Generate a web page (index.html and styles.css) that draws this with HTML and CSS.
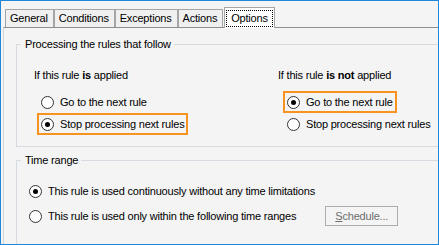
FILE: index.html
```html
<!DOCTYPE html>
<html lang="en">
<head>
<meta charset="utf-8">
<title>Rule options</title>
<link rel="stylesheet" href="styles.css">
</head>
<body>
<div class="window">
  <div class="tabstrip">
    <div class="tab">General</div>
    <div class="tab">Conditions</div>
    <div class="tab">Exceptions</div>
    <div class="tab">Actions</div>
    <div class="tab active"><span class="focus">Options</span></div>
  </div>
  <div class="panel">
    <fieldset class="group g1">
      <legend>Processing the rules that follow</legend>
      <div class="cols">
        <div class="col col-left">
          <div class="caption">If this rule <b>is</b> applied</div>
          <div class="opts">
            <label class="opt"><span class="radio"></span>Go to the next rule</label>
            <label class="opt hl"><span class="radio on"></span>Stop processing next rules</label>
          </div>
        </div>
        <div class="col col-right">
          <div class="caption">If this rule <b>is not</b> applied</div>
          <div class="opts">
            <label class="opt hl"><span class="radio on"></span>Go to the next rule</label>
            <label class="opt"><span class="radio"></span>Stop processing next rules</label>
          </div>
        </div>
      </div>
    </fieldset>
    <fieldset class="group g2">
      <legend>Time range</legend>
      <div class="rows">
        <label class="opt"><span class="radio on"></span>This rule is used continuously without any time limitations</label>
        <div class="opt"><span class="radio"></span>This rule is used only within the following time ranges<button class="btn" disabled><u>S</u>chedule...</button></div>
      </div>
    </fieldset>
  </div>
</div>
</body>
</html>
```
FILE: styles.css
```css
* { box-sizing: border-box; }
html, body { margin: 0; padding: 0; }
body {
  font-family: "Liberation Sans", Arial, sans-serif;
  font-size: 11px;
  letter-spacing: -0.2px;
  color: #000;
  background: #f4f4f4;
}
.window {
  width: 439px;
  height: 245px;
  border: 1px solid #1e87d9;
  background: #f4f4f4;
  overflow: hidden;
}
.tabstrip {
  display: flex;
  align-items: flex-end;
  height: 21px;
  margin-top: 6px;
  padding-left: 4px;
  position: relative;
  z-index: 1;
}
.tab {
  height: 18px;
  margin-bottom: 1px;
  padding: 0 5px 0 4px;
  border: 1px solid #a5a5a5;
  border-bottom: none;
  background: #f0f0f0;
  line-height: 17px;
  white-space: nowrap;
}
.tab.active {
  height: 21px;
  margin: 0 0 0 1px;
  padding: 2px 1px 0;
  background: #fff;
}
.focus {
  display: block;
  height: 17px;
  padding: 0 4px;
  border: 1px dotted #000;
  line-height: 14px;
}
.panel {
  margin: -1px -40px 0 2px;
  height: 240px;
  border-top: 1px solid #8e8e8e;
  border-left: 1px solid #d4d4d4;
}
.group {
  margin: 0 0 0 12px;
  padding: 0;
  border: 1px solid #d5dbe0;
  min-width: 0;
}
.group legend {
  margin-left: 4px;
  padding: 0 3px 0 4px;
  line-height: 13px;
}
.g1 {
  margin-top: 10px;
  padding: 17px 0 11px;
}
.g2 {
  margin-top: 7px;
  padding: 13px 0 20px;
}
.cols {
  display: flex;
  padding-left: 17px;
}
.col-left { width: 244px; }
.caption { line-height: 14px; }
.opts {
  display: flex;
  flex-direction: column;
  align-items: flex-start;
  margin-top: 9px;
  margin-left: 3px;
}
.col-right .opts { margin-left: 5px; }
.opt {
  display: flex;
  align-items: center;
  height: 22px;
  padding: 0 2px;
  border: 2px solid transparent;
  white-space: nowrap;
}
.opt.hl { border-color: #f7931e; }
.radio {
  display: grid;
  place-items: center;
  flex: none;
  width: 13px;
  height: 13px;
  margin-right: 6px;
  border: 1px solid #333;
  border-radius: 50%;
  background: #fff;
}
.radio.on::after {
  content: "";
  width: 5px;
  height: 5px;
  border-radius: 50%;
  background: #000;
}
.rows {
  display: flex;
  flex-direction: column;
  align-items: flex-start;
  gap: 3px;
  padding-left: 8px;
}
.btn {
  width: 73px;
  height: 20px;
  margin-left: 29px;
  padding: 0;
  border: 1px solid #adadad;
  background: #f4f4f4;
  color: #6d6d6d;
  font: inherit;
  letter-spacing: inherit;
}
```
